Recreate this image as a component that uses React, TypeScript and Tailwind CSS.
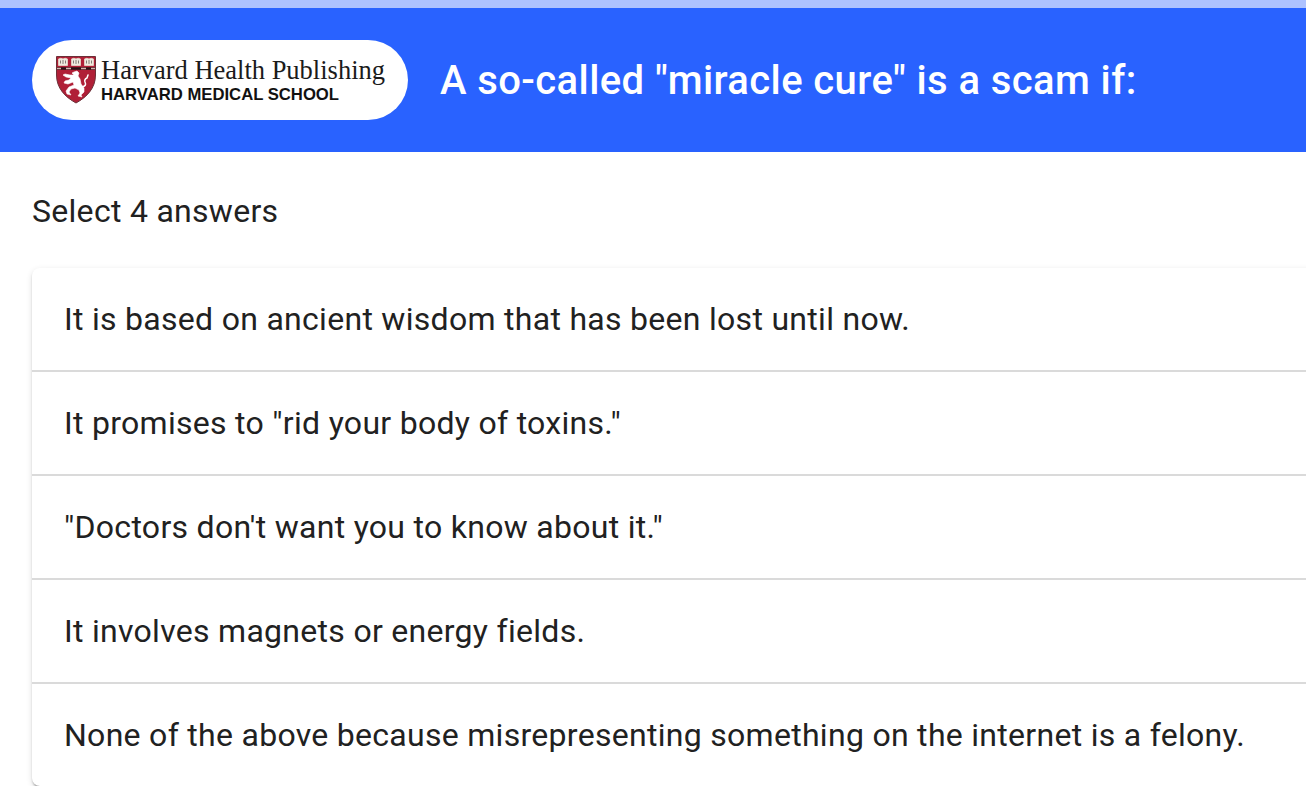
import React from "react";

// data
const ANSWERS = [
    "It is based on ancient wisdom that has been lost until now.",
    "It promises to \"rid your body of toxins.\"",
    "\"Doctors don't want you to know about it.\"",
    "It involves magnets or energy fields.",
    "None of the above because misrepresenting something on the internet is a felony.",
];

const Logo = () => (
    <svg width="344" height="56" viewBox="0 -3 344 56" className="shrink-0 overflow-visible">
        {/* shield */}
        <path d="M.5 1.500H39.500V20C39.500 33 31 42 20 48C9 42 .5 33 .5 20Z" fill="#b01f37" stroke="#6b3038" strokeWidth="1" />
        <path d="M1 13.500H39" stroke="#2a1416" strokeWidth="2.600" />
        <path d="M1 13.500h4M10 13.500h5M25 13.500h5M35 13.500h4" stroke="#d8b4b0" strokeWidth="1.400" />
        <path d="M2.500 4q2.500-1.500 4.500 0q2-1.500 4.500 0v6.500h-9zM15.500 4q2.500-1.500 4.500 0q2-1.500 4.500 0v6.500h-9zM28.500 4q2.500-1.500 4.500 0q2-1.500 4.500 0v6.500h-9z" fill="#f0ebe0" stroke="#e4d9cc" strokeWidth=".8" />
        <path d="M4.500 5.500v3M7 5v4M9.500 5.500v3M17.500 5.500v3M20 5v4M22.500 5.500v3M30.500 5.500v3M33 5v4M35.500 5.500v3" stroke="#77706a" strokeWidth=".9" />

        {/* lion */}
        <path d="M18 17l3-1 2 2-1 3 2 3 1 5 3 4 0 4-3 3 1 2-4-1 2-3-1-3-4-2-4 1-2 3 2 3-4-1-1-3 3-4 5-2-1-3-5 2-4-1 1-2 4-1 2-2-5-1-3-2 2-1 5 1 4 0-2-2z" fill="#fff" stroke="#fff" strokeWidth=".6" strokeLinejoin="round" />
        <path d="M26 32q5-1 3-5q-1-3 2-4l1-3" fill="none" stroke="#fff" strokeWidth="1.500" strokeLinecap="round" />

        {/* wordmark */}
        <text x="45" y="24" textLength="284" lengthAdjust="spacingAndGlyphs" fontSize="27" fill="#1b1b1b" className="font-['Liberation_Serif',serif]">
            Harvard Health Publishing
        </text>
        <text x="45" y="45" textLength="238" lengthAdjust="spacingAndGlyphs" fontSize="17" fontWeight="700" fill="#111" className="font-['Liberation_Sans',sans-serif]">
            HARVARD MEDICAL SCHOOL
        </text>
    </svg>
);

const App = () => {
    return (
        <div className="h-[786px] overflow-hidden bg-white font-[Roboto,sans-serif] text-[#212121]">
            {/* progress */}
            <div className="h-2 bg-[#adc2ff]" />

            {/* header */}
            <header className="flex h-36 items-center gap-8 bg-[#2962ff] px-8">
                <div className="flex h-20 w-[376px] shrink-0 items-center rounded-full bg-white pl-6">
                    <Logo />
                </div>
                <h1 className="pt-0.5 whitespace-nowrap text-[40px] font-medium tracking-[0.4px] text-white">
                    A so-called "miracle cure" is a scam if:
                </h1>
            </header>

            {/* answers */}
            <main className="pl-8">
                <p className="pt-[35px] text-[32px] leading-[48px] tracking-[0.29px]">Select 4 answers</p>
                <ul className="mt-[33px] w-[1400px] rounded-lg shadow-[0_4px_2px_-2px_rgba(0,0,0,0.2),0_2px_2px_rgba(0,0,0,0.14),0_2px_6px_rgba(0,0,0,0.12)]">
                    {ANSWERS.map((answer) => (
                        <li key={answer} className="flex h-26 items-center border-t-2 border-[#dadada] px-8 text-[32px] tracking-[0.29px] first:h-[102px] first:border-t-0">
                            {answer}
                        </li>
                    ))}
                </ul>
            </main>
        </div>
    );
};

export default App;
